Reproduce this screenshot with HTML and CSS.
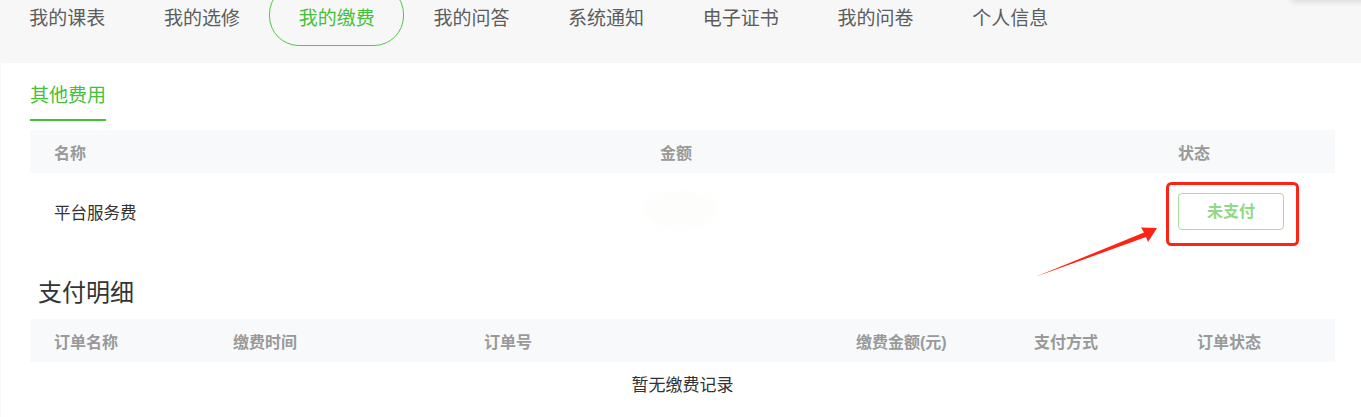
FILE: index.html
```html
<!DOCTYPE html>
<html lang="zh-CN">
  <head>
    <meta charset="UTF-8" />
    <meta name="viewport" content="width=device-width, initial-scale=1.0" />
    <title>我的缴费</title>
    <link rel="stylesheet" href="styles.css">
  </head>
  <body>
    <div class="page">
      <div class="top-shadow"></div>
      <ul class="nav">
        <li><a href="javascript:;">我的课表</a></li>
        <li><a href="javascript:;">我的选修</a></li>
        <li class="active"><a href="javascript:;">我的缴费</a></li>
        <li><a href="javascript:;">我的问答</a></li>
        <li><a href="javascript:;">系统通知</a></li>
        <li><a href="javascript:;">电子证书</a></li>
        <li><a href="javascript:;">我的问卷</a></li>
        <li><a href="javascript:;">个人信息</a></li>
      </ul>

      <div class="content">
        <div class="tabs">
          <span class="tab">其他费用</span>
        </div>

        <div class="table fee-table">
          <div class="thead">
            <div class="cell">名称</div>
            <div class="cell">金额</div>
            <div class="cell">状态</div>
          </div>
          <div class="row">
            <div class="cell">平台服务费</div>
            <div class="cell"><span class="amount"></span></div>
            <div class="cell"><a class="btn-pay" href="javascript:;">未支付</a></div>
          </div>
        </div>

        <h2 class="title">支付明细</h2>

        <div class="table order-table">
          <div class="thead">
            <div class="cell">订单名称</div>
            <div class="cell">缴费时间</div>
            <div class="cell">订单号</div>
            <div class="cell">缴费金额(元)</div>
            <div class="cell">支付方式</div>
            <div class="cell">订单状态</div>
          </div>
          <div class="empty">暂无缴费记录</div>
        </div>
      </div>

      <!-- 标注: 红框 + 箭头 -->
      <svg class="mark" width="1361" height="417" viewBox="0 0 1361 417">
        <rect x="1167.5" y="183.5" width="130" height="61" rx="4" fill="none" stroke="#ff2316" stroke-width="3" />
        <path d="M1035 277 L1144 232.6 L1141 227.5 L1157 228 L1148 242 L1146 237 Z" fill="#ff2316" />
      </svg>
    </div>
  </body>
</html>
```

FILE: styles.css
```css
* {
  margin: 0;
  padding: 0;
  list-style: none;
  box-sizing: border-box;
}
a {
  text-decoration: none;
  color: inherit;
}
html,
body {
  width: 100%;
  height: 100%;
  overflow: hidden;
  background-color: #f7f7f7;
  font-family: 'Liberation Sans', 'Noto Sans CJK SC', sans-serif;
}
.page {
  position: relative;
  min-height: 100%;
}
/* 右上角下拉框留下的阴影 */
.top-shadow {
  position: absolute;
  top: -30px;
  right: -10px;
  width: 80px;
  height: 30px;
  background-color: #f7f7f7;
  box-shadow: 0 2px 6px rgba(0, 0, 0, 0.12);
}
.nav {
  display: flex;
  height: 63px;
}
.nav li {
  position: relative;
  width: 134.7px;
  height: 37px;
  line-height: 37px;
  text-align: center;
  font-size: 19px;
  color: #5c5c5c;
}
.nav li.active {
  color: #46c03a;
}
.nav li.active::before {
  content: '';
  position: absolute;
  top: -16px;
  left: 0;
  right: 0;
  height: 60px;
  border: 1px solid #52c848;
  border-radius: 30px;
}
.content {
  margin-left: 1px;
  padding: 20px 26px 20px 29px;
  background-color: #fff;
  min-height: 354px;
}
.tabs {
  height: 47px;
}
.tab {
  display: inline-block;
  height: 38px;
  line-height: 26px;
  padding-bottom: 10px;
  font-size: 19px;
  color: #46c03a;
  border-bottom: 2px solid #46c03a;
}
.table {
  width: 1305px;
  font-size: 16px;
}
.thead,
.row {
  display: grid;
  align-items: center;
}
.thead {
  height: 43px;
  background-color: #f8f9fb;
  font-weight: bold;
  color: #999;
}
.row {
  height: 77px;
  color: #333;
}
.cell {
  padding-left: 24px;
  white-space: nowrap;
}
.fee-table .thead,
.fee-table .row {
  grid-template-columns: 606px 518px 1fr;
}
.fee-table .row .cell:first-child {
  font-size: 16.5px;
}
.order-table .thead {
  grid-template-columns: 179px 251px 372px 178px 163px 1fr;
}
.amount {
  display: inline-block;
  margin-left: -16px;
  width: 74px;
  height: 38px;
  border-radius: 50%;
  background-color: #fdfdfb;
  filter: blur(3px);
}
.btn-pay {
  display: block;
  width: 106px;
  height: 37px;
  line-height: 35px;
  text-align: center;
  border: 1px solid #9ee197;
  border-radius: 4px;
  color: #8fd98a;
  font-weight: bold;
}
.title {
  margin: 26px 0 0 8px;
  height: 43px;
  line-height: 34px;
  font-size: 24px;
  font-weight: normal;
  color: #333;
}
.empty {
  height: 48px;
  line-height: 48px;
  text-align: center;
  font-size: 17px;
  color: #333;
}
.mark {
  position: absolute;
  top: 0;
  left: 0;
  pointer-events: none;
}
```
